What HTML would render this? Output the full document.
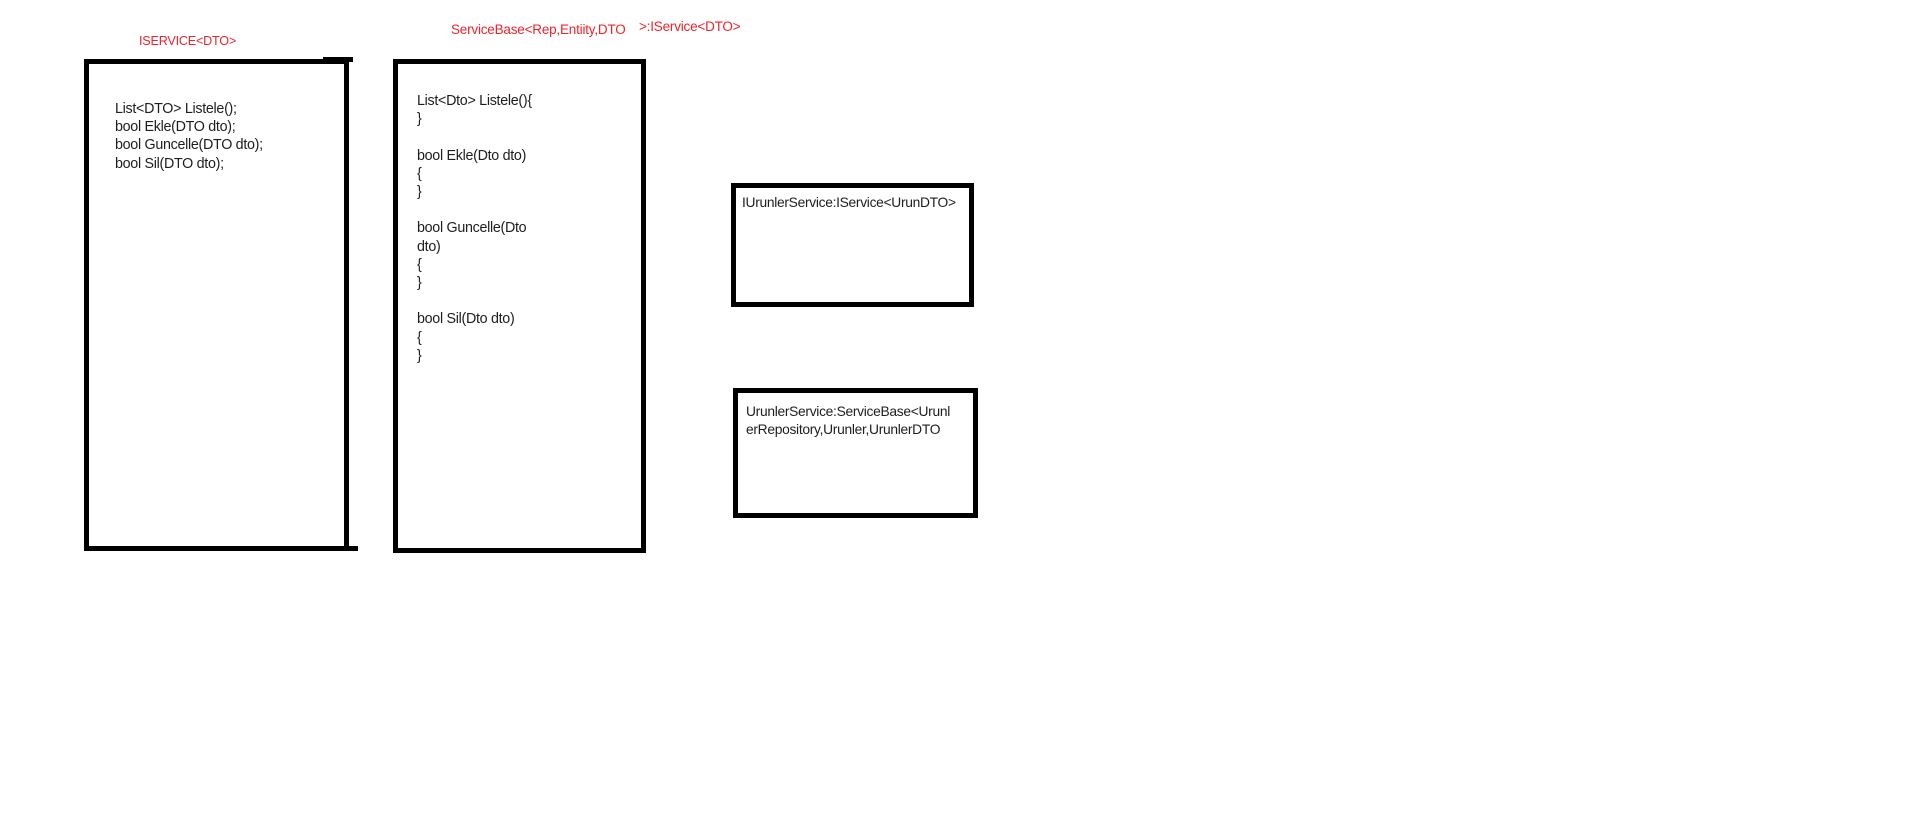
<!DOCTYPE html>
<html><head><meta charset="utf-8"><style>
html,body{margin:0;padding:0;background:#fff;width:1914px;height:818px;overflow:hidden;position:relative;font-family:"Liberation Sans",sans-serif}
.b{position:absolute;border:5px solid #000;box-sizing:border-box}
.l{position:absolute;background:#000}
.t{position:absolute;font-size:14.3px;color:#1e1e1e;line-height:18.2px;white-space:pre;letter-spacing:-0.3px}
.r{position:absolute;font-size:13.5px;color:#f0232d;white-space:pre;letter-spacing:-0.2px;line-height:16px}
</style></head><body>
<div class="r" style="left:139px;top:33px;font-size:12.6px">ISERVICE&lt;DTO&gt;</div>
<div class="r" style="left:451px;top:22px">ServiceBase&lt;Rep,Entiity,DTO</div>
<div class="r" style="left:639px;top:19px">&gt;:IService&lt;DTO&gt;</div>

<div class="l" style="left:84px;top:59px;width:264px;height:5px"></div>
<div class="l" style="left:323px;top:57px;width:30px;height:5px"></div>
<div class="l" style="left:84px;top:59px;width:5px;height:492px"></div>
<div class="l" style="left:344px;top:58px;width:5px;height:493px"></div>
<div class="l" style="left:84px;top:546px;width:274px;height:5px"></div>
<div class="t" style="left:115px;top:100px">List&lt;DTO&gt; Listele();
bool Ekle(DTO dto);
bool Guncelle(DTO dto);
bool Sil(DTO dto);</div>

<div class="b" style="left:393px;top:59px;width:253px;height:494px"></div>
<div class="t" style="left:417px;top:92px">List&lt;Dto&gt; Listele(){
}

bool Ekle(Dto dto)
{
}

bool Guncelle(Dto
dto)
{
}

bool Sil(Dto dto)
{
}</div>

<div class="b" style="left:731px;top:183px;width:243px;height:124px"></div>
<div class="t" style="left:742px;top:194px;font-size:13.8px">IUrunlerService:IService&lt;UrunDTO&gt;</div>

<div class="b" style="left:733px;top:388px;width:245px;height:130px"></div>
<div class="t" style="left:746px;top:403px;line-height:18px;font-size:13.8px">UrunlerService:ServiceBase&lt;Urunl
erRepository,Urunler,UrunlerDTO</div>
</body></html>
